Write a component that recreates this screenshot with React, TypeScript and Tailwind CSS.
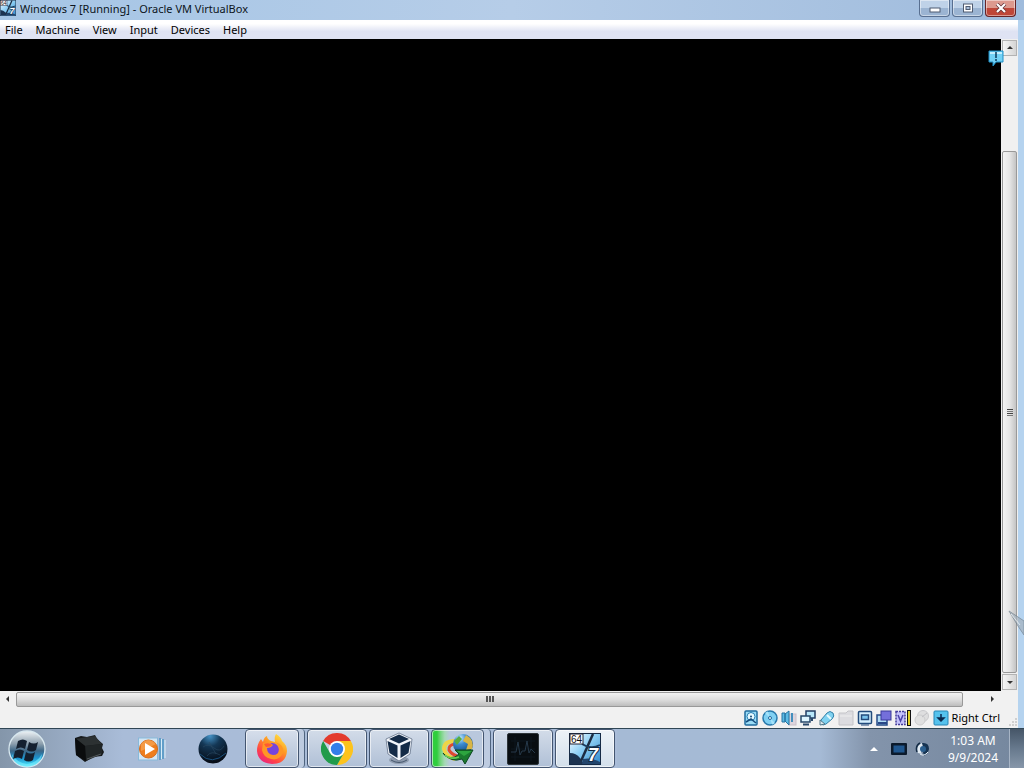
import React from "react";

const menus = ["File", "Machine", "View", "Input", "Devices", "Help"];

function VmIcon({ className }: { className: string }) {
  return (
    <svg viewBox="0 0 32 32" className={className} aria-hidden="true">
      <defs>
        <linearGradient id="vmg" x1="0" y1="0" x2="1" y2="1">
          <stop offset="0" stopColor="#ffffff" />
          <stop offset=".45" stopColor="#8fd0f5" />
          <stop offset="1" stopColor="#2f86c8" />
        </linearGradient>
      </defs>
      <rect x=".5" y=".5" width="31" height="31" fill="url(#vmg)" stroke="#152a45" />
      <path d="M1 20 Q7 20 11 25 L15 31 H1Z" fill="#1c3350" />
      <path d="M24 1 L12 28" stroke="#1c2c42" strokeWidth="2.500" />
      <path d="M13 11 Q22 17 31 12" stroke="#1c3c5e" strokeWidth="2" fill="none" />
      <path d="M14 26 Q22 24 31 29 V31 H13Z" fill="#22456d" />
      <rect x="1" y="1" width="13" height="10" fill="#fff" stroke="#223" />
      <text x="2" y="9.500" fontSize="10" fontFamily="Liberation Sans, sans-serif" fill="#111">64</text>
      <text x="19" y="28" fontSize="18" fontWeight="bold" fontStyle="italic" fontFamily="Liberation Sans, sans-serif" fill="#fff" stroke="#122a44" strokeWidth="2" paintOrder="stroke">7</text>
    </svg>
  );
}

function StartIcon() {
  return (
    <svg viewBox="0 0 38 38" className="size-[38px]" aria-hidden="true">
      <defs>
        <linearGradient id="orb" x1="0" y1="0" x2="0" y2="1">
          <stop offset="0" stopColor="#eef3f6" />
          <stop offset=".35" stopColor="#8ea0ae" />
          <stop offset=".55" stopColor="#3d6685" />
          <stop offset=".75" stopColor="#1c93cf" />
          <stop offset="1" stopColor="#55f0ff" />
        </linearGradient>
      </defs>
      <circle cx="19" cy="19" r="18" fill="url(#orb)" stroke="#d8e8ef" strokeWidth="1.3" />
      <path d="M4 24 Q9 33 19 34 Q29 33 34 24 Q33 36 19 37 Q5 36 4 24" fill="#7ceeff" opacity=".6" />
      <path d="M10 11 q5-3 9 0 l-2 8 q-4-3-9 0z M21 12 q5 3 9 0 l-2 8 q-4 3-9 0z M7 21 q5-3 9 0 l-2 8 q-4-3-9 0z M18 22 q5 3 9 0 l-2 8 q-4 3-9 0z" fill="#14202f" />
    </svg>
  );
}

function BoxIcon() {
  return (
    <svg viewBox="0 0 32 32" className="size-8" aria-hidden="true">
      <path d="M2 5 L8 3 L14 4 L22 2 L24 6 L30 11 L29 15 L31 19 L29 23 L20 24 L12 29 L3 22Z" fill="#171a1b" />
      <path d="M3 6 L14 4 L22 3 L29 11 L12 13Z" fill="#2c3132" />
      <path d="M12 13 L29 11 L29 21 L13 28Z" fill="#202526" />
      <path d="M2 5 L12 13 L13 28 L3 22Z" fill="#0a0c0d" />
      <path d="M14 26 L28 21" stroke="#53595b" />
    </svg>
  );
}

function PlayerIcon() {
  return (
    <svg viewBox="0 0 30 28" className="h-7 w-[30px]" aria-hidden="true">
      <path d="M24 3 V25 M27 4 V24" stroke="#3e8fc0" strokeWidth="1.3" />
      <path d="M25.5 4 V24 M29 5 V23" stroke="#d8edf8" />
      <rect x="2.5" y="3" width="19" height="22" fill="#d4e6f4" stroke="#88b9da" />
      <circle cx="12.500" cy="14" r="9" fill="#ee7d1d" stroke="#d46b1b" />
      <path d="M5 9 Q12 1 20 9 Q12 13 5 16Z" fill="#f9ad61" opacity=".6" />
      <path d="M9 8 L19 14 L9 20Z" fill="#fff" />
    </svg>
  );
}

function GlobeIcon() {
  return (
    <svg viewBox="0 0 32 32" className="size-8" aria-hidden="true">
      <defs>
        <radialGradient id="darkball" cx=".4" cy=".05" r=".9">
          <stop offset="0" stopColor="#4592c6" />
          <stop offset=".4" stopColor="#143755" />
          <stop offset="1" stopColor="#060d18" />
        </radialGradient>
      </defs>
      <circle cx="16" cy="16" r="14.500" fill="url(#darkball)" />
      <path d="M6 14 Q11 10 17 15 T27 13 M10 23 Q14 17 23 22 M12 9 L19 21" stroke="#2b4963" fill="none" opacity=".6" />
      <path d="M3 21 Q15 33 29 20" fill="none" stroke="#19507c" />
    </svg>
  );
}

function FirefoxIcon() {
  return (
    <svg viewBox="0 0 32 32" className="size-8" aria-hidden="true">
      <defs>
        <linearGradient id="ff" x1=".9" y1="0" x2=".2" y2="1">
          <stop offset="0" stopColor="#fff04a" />
          <stop offset=".4" stopColor="#ff9a24" />
          <stop offset=".75" stopColor="#ff4148" />
          <stop offset="1" stopColor="#e52388" />
        </linearGradient>
      </defs>
      <path d="M20 1 Q25 4 26 8 Q31 12 31 18 Q30 31 16 31 Q2 30 1 18 Q1 11 5 6 L7 9 Q8 4 11 3 Q11 6 15 8 L19 9 Q18 4 20 1Z" fill="url(#ff)" />
      <circle cx="16" cy="17" r="7" fill="#7644dc" />
      <path d="M7 10 Q13 8 17 12 Q15 15 11 15 Q11 21 17 22 Q23 22 23 16 Q23 12 19 9 Q29 12 27 20 Q23 28 15 26 Q7 24 6 17Z" fill="#ff9625" />
      <path d="M8 11 Q13 9 16 12 Q14 14 10 14" fill="#ff5b30" />
    </svg>
  );
}

function ChromeIcon() {
  return (
    <svg viewBox="0 0 32 32" className="size-8" aria-hidden="true">
      <path d="M16 16 L2.140 8 A16 16 0 0 1 29.860 8Z" fill="#e33b2e" />
      <path d="M16 8 H29.860 A16 16 0 0 1 16 32 L22.930 20Z" fill="#fcc31e" />
      <path d="M2.140 8 L9.070 20 L16 24 L22.930 20 L16 32 A16 16 0 0 1 2.140 8Z" fill="#219b4b" />
      <circle cx="16" cy="16" r="8" fill="#fff" />
      <circle cx="16" cy="16" r="6.200" fill="#337ee8" />
    </svg>
  );
}

function CubeIcon() {
  return (
    <svg viewBox="0 0 32 34" className="h-[34px] w-8" aria-hidden="true">
      <ellipse cx="16" cy="28" rx="10" ry="4" fill="#8f9caf" />
      <path d="M16 1 L29 7 L27 22 L16 29 L5 22 L3 7Z" fill="#f2f5fa" stroke="#53637b" strokeWidth=".7" />
      <path d="M16 2.500 L26 7 L16 11.500 L6 7Z M4.500 9 L14.500 13.500 V26 L6.500 21Z M27.500 9 L17.500 13.500 V26 L25.500 21Z" fill="#142b47" />
      <path d="M8 28 Q16 33 24 28" stroke="#45576e" fill="none" />
    </svg>
  );
}

function DownloaderIcon() {
  return (
    <svg viewBox="0 0 34 32" className="h-8 w-[34px]" aria-hidden="true">
      <defs>
        <radialGradient id="earth" cx=".35" cy=".2" r=".8">
          <stop offset="0" stopColor="#c7ebff" />
          <stop offset=".4" stopColor="#3c8bd1" />
          <stop offset="1" stopColor="#12477e" />
        </radialGradient>
      </defs>
      <path d="M14 8 Q3 8 3 16 Q5 24 14 26" fill="none" stroke="#eed447" strokeWidth="4" />
      <path d="M14 11 Q7 12 8 17 Q10 21 16 23" fill="none" stroke="#dd4930" strokeWidth="3" />
      <circle cx="22" cy="11" r="10" fill="url(#earth)" />
      <path d="M25 2 Q34 7 31 16 L25 17 L27 11 L22 8Z" fill="#d8b545" />
      <path d="M13 8 L18 3 L21 6 L16 12Z" fill="#58ad42" />
      <path d="M2 20 Q5 26 14 24 L18 21 L14 17 L32 17 L24 31 L21 26 Q10 30 2 20Z" fill="#1a7a2e" stroke="#0d4921" />
      <path d="M16 18 L31 18 L23 23Z" fill="#2da53f" />
      <path d="M4 22 Q9 27 18 24" stroke="#65ce54" strokeWidth="1.500" fill="none" />
    </svg>
  );
}

function MonitorIcon() {
  return (
    <svg viewBox="0 0 32 32" className="size-8" aria-hidden="true">
      <rect x=".5" y=".5" width="31" height="31" rx="1.500" fill="#080d11" stroke="#2d3438" />
      <path d="M4 8 H28 M4 16 H28 M4 24 H28 M8 4 V28 M24 4 V28" stroke="#0d171e" />
      <path d="M4 19 H9 L11 9 L13 22 L15 18 H18 L20 8 L22 20 L24 16 L28 20" stroke="#26394a" fill="none" />
    </svg>
  );
}

const pinned = [
  { name: "Storage", icon: <BoxIcon /> },
  { name: "Media player", icon: <PlayerIcon /> },
  { name: "Globe", icon: <GlobeIcon /> },
];

const tasks = [
  { name: "Firefox", icon: <FirefoxIcon />, look: "stack" },
  { name: "Chrome", icon: <ChromeIcon />, look: "plain" },
  { name: "VirtualBox", icon: <CubeIcon />, look: "plain" },
  { name: "Download manager", icon: <DownloaderIcon />, look: "progress" },
  { name: "Monitor", icon: <MonitorIcon />, look: "plain" },
  { name: "Windows 7 machine", icon: <VmIcon className="size-8" />, look: "active" },
];

const face: Record<string, string> = {
  stack: "mr-[5px] bg-linear-to-b from-[#d6deeb] to-[#b0c0d6]",
  plain: "bg-linear-to-b from-[#d3dce9] to-[#b0c0d6]",
  progress: "mr-[6px] bg-linear-to-r from-[#2fce3e] from-10% via-[#a5d9b5] via-25% to-[#b9c8dd] to-35%",
  active: "bg-linear-to-b from-[#eef3f8] to-[#d3dfeb]",
};

const statusIcons: { name: string; art: React.ReactNode }[] = [
  {
    name: "Hard disks",
    art: (
      <>
        <rect x="2" y="1" width="12" height="14" rx="1" fill="#9bdcf6" stroke="#216b9d" strokeWidth="1.500" />
        <circle cx="8" cy="6.500" r="4" fill="#e7faff" stroke="#267cb1" />
        <circle cx="8" cy="6.500" r="1" fill="#174976" />
        <path d="M3 12 L8 9 L13 13" stroke="#174e7e" strokeWidth="1.500" fill="none" />
      </>
    ),
  },
  {
    name: "Optical drives",
    art: (
      <>
        <circle cx="8" cy="8" r="7" fill="#7fd0f3" stroke="#2879ac" strokeWidth="1.500" />
        <path d="M8 8 L3 3 A7 7 0 0 1 6 1.500Z M8 8 L13 13 A7 7 0 0 1 10 14.500Z" fill="#a5e2fa" />
        <circle cx="8" cy="8" r="1.500" fill="#edfaff" stroke="#226b9e" />
      </>
    ),
  },
  {
    name: "Audio",
    art: (
      <>
        <rect x="8" y="4" width="7" height="11" fill="#dcd4dc" stroke="#c9bfc9" />
        <path d="M1 3 H4 V12 H1Z M4 4 L8 1 V15 L4 11Z" fill="#5dbbe4" stroke="#2773a1" />
        <path d="M11 3 V12" stroke="#438fbd" strokeWidth="2" />
      </>
    ),
  },
  {
    name: "Network",
    art: (
      <>
        <path d="M6 1 H15 V8 H6Z" fill="#b9e7fa" stroke="#233d63" strokeWidth="1.500" />
        <path d="M1 6 H10 V12 H1Z" fill="#dff5ff" stroke="#28486b" strokeWidth="1.500" />
        <path d="M3 14.500 H9 M12 8 V11" stroke="#28486b" strokeWidth="2" />
      </>
    ),
  },
  {
    name: "USB",
    art: (
      <>
        <path d="M2 10 L8 3 Q11 0 14 3 Q16 6 13 9 L7 14 Q1 17 2 10Z" fill="#80d2f1" stroke="#3381a8" />
        <path d="M1 10 L6 14 L1 15Z" fill="#dbe8ee" stroke="#53788b" />
        <path d="M8 5 L12 9" stroke="#e6fbff" strokeWidth="2" />
      </>
    ),
  },
  {
    name: "Shared folders",
    art: (
      <>
        <path d="M1 3 H8 L10 1 H15 V15 H1Z" fill="#dcdce0" stroke="#c4c4c8" />
        <path d="M2 6 H14" stroke="#eee" />
      </>
    ),
  },
  {
    name: "Display",
    art: (
      <>
        <rect x="1.500" y="1.500" width="13" height="12" rx="1" fill="#d6f0ff" stroke="#224b7c" strokeWidth="1.500" />
        <rect x="4.500" y="5" width="7" height="4.500" fill="#7ac4ed" stroke="#224b7c" strokeWidth="1.500" />
        <path d="M4 15 H12" stroke="#224b7c" />
      </>
    ),
  },
  {
    name: "Recording",
    art: (
      <>
        <rect x="1" y="5" width="10" height="10" fill="#b0dcf4" stroke="#264b87" strokeWidth="1.500" />
        <rect x="5" y="1" width="10" height="9" fill="#746fdb" stroke="#3b3a99" />
        <path d="M2 13 H11" stroke="#294887" strokeWidth="2" />
      </>
    ),
  },
  {
    name: "Processor",
    art: (
      <>
        <rect x="1" y="1.500" width="9" height="13" fill="#c4c2fa" stroke="#443d9b" strokeWidth="1.500" strokeDasharray="2 1" />
        <path d="M3 5 L5.500 11 L8 5" stroke="#4b43a8" strokeWidth="1.500" fill="none" />
        <rect x="12" y="0" width="4" height="16" fill="#111" />
        <rect x="13" y="1" width="2" height="14" fill="#dfcf26" />
      </>
    ),
  },
  {
    name: "Mouse",
    art: (
      <>
        <circle cx="9" cy="6" r="5.500" fill="#dededf" stroke="#c9c9cc" />
        <circle cx="6" cy="10" r="5" fill="#e0e0e0" stroke="#cdcdce" />
        <path d="M8 7 L13 3" stroke="#c0c0c4" />
      </>
    ),
  },
  {
    name: "Keyboard",
    art: (
      <>
        <rect x="1" y="1" width="14" height="14" rx="1" fill="#55c2ed" stroke="#2785b6" />
        <path d="M8 4 V9 M5 8 L8 11 L11 8Z" stroke="#0b294d" strokeWidth="1.500" fill="#0b294d" />
      </>
    ),
  },
];

const arrowPaths = {
  up: "M1 5 L4 2 L7 5Z",
  down: "M1 3 L4 6 L7 3Z",
  left: "M5 1 L2 4 L5 7Z",
  right: "M3 1 L6 4 L3 7Z",
};

function ScrollArrow({ dir, framed }: { dir: keyof typeof arrowPaths; framed?: boolean }) {
  return (
    <button
      aria-label={"Scroll " + dir}
      className={
        framed
          ? "flex h-4 w-[15px] shrink-0 items-center justify-center border border-[#b3b3b3] bg-linear-to-r from-[#f5f5f5] to-[#d5d5d5]"
          : "flex size-4 shrink-0 items-center justify-center"
      }
    >
      <svg viewBox="0 0 8 8" className="size-2">
        <path d={arrowPaths[dir]} fill="#333" />
      </svg>
    </button>
  );
}

const windowButton = "flex h-[17px] items-center justify-center rounded-b-sm border border-t-0 shadow-[inset_0_0_0_1px_rgba(255,255,255,0.45)]";

export default function App() {
  return (
    <div className="relative flex h-screen flex-col overflow-hidden bg-[#b5d3ef] font-['Noto_Sans','Open_Sans',sans-serif] text-[11px] text-black select-none">
      <header className="flex h-5 shrink-0 items-start bg-linear-to-r from-[#a5c5e5] via-[#b6cde8] to-[#9fbbdc] pr-2">
        <VmIcon className="size-4" />
        <h1 className="ml-1 flex-1 truncate text-[11px] leading-[18px] text-[#0c1420]">Windows 7 [Running] - Oracle VM VirtualBox</h1>
        <div className="flex gap-[2px]">
          <button aria-label="Minimize" className={windowButton + " w-[31px] border-[#586f90] bg-linear-to-b from-[#bfd2e8] from-50% to-[#9bb4d2] to-50%"}>
            <svg viewBox="0 0 14 10" className="h-[10px] w-[14px]">
              <rect x="2" y="5" width="10" height="4" fill="#fff" stroke="#4f5b70" />
            </svg>
          </button>
          <button aria-label="Restore" className={windowButton + " w-[31px] border-[#586f90] bg-linear-to-b from-[#bfd2e8] from-50% to-[#9bb4d2] to-50%"}>
            <svg viewBox="0 0 12 10" className="h-[10px] w-3">
              <rect x="1.500" y="1" width="9" height="8" fill="#fff" stroke="#4f5b70" />
              <rect x="4" y="3.500" width="4" height="3" fill="#a9bfda" stroke="#4f5b70" />
            </svg>
          </button>
          <button aria-label="Close" className={windowButton + " w-[31px] border-[#672326] bg-linear-to-b from-[#dc998e] from-50% to-[#be4638] to-50%"}>
            <svg viewBox="0 0 12 10" className="h-[10px] w-3">
              <path d="M2 1 L10 9 M10 1 L2 9" stroke="#603035" strokeWidth="3.600" />
              <path d="M2 1 L10 9 M10 1 L2 9" stroke="#fff" strokeWidth="2.200" />
            </svg>
          </button>
        </div>
      </header>

      <div className="mr-[6px] flex min-h-0 flex-1 flex-col bg-[#f1f1f1]">
        <nav className="flex h-[19px] shrink-0 items-center gap-[13px] bg-linear-to-b from-white from-20% to-[#dfe3f3] to-60% pl-[5px]">
          {menus.map((m) => (
            <button key={m} className="text-[11px] leading-[18px]">
              {m}
            </button>
          ))}
        </nav>

        <div className="flex min-h-0 flex-1">
          <main aria-label="Guest screen" className="relative mr-px flex-1 bg-black">
            <svg viewBox="0 0 16 18" className="absolute top-[11px] -right-[3px] h-[18px] w-4" aria-hidden="true">
              <path d="M1 1 H15 V12 H8 L5 16 V12 H1Z" fill="#72d2f6" stroke="#208fc5" />
              <path d="M2 3 H14" stroke="#c3efff" strokeWidth="2" />
              <path d="M8 2 V8 M8 9 V11" stroke="#093a5e" strokeWidth="1.500" />
            </svg>
          </main>
          <div className="flex w-4 flex-col items-start bg-[#f0f0f0] py-px">
            <ScrollArrow dir="up" framed />
            <div className="h-[95px] shrink-0" />
            <div className="mb-px flex w-[15px] flex-1 flex-col items-center justify-center gap-px rounded-xs border border-[#999] bg-linear-to-r from-[#f4f4f4] via-[#e6e6e6] to-[#c4c4c4]">
              <span className="h-px w-1.5 bg-[#444]" />
              <span className="h-px w-1.5 bg-[#777]" />
              <span className="h-px w-1.5 bg-[#444]" />
              <span className="h-px w-1.5 bg-[#777]" />
            </div>
            <ScrollArrow dir="down" framed />
          </div>
        </div>

        <div className="mr-[18px] flex h-4 shrink-0 items-center">
          <ScrollArrow dir="left" />
          <div className="flex h-[15px] flex-1 items-center justify-center gap-px rounded-xs border border-[#999] bg-linear-to-b from-[#f2f2f2] via-[#dedede] to-[#bdbdbd]">
            <span className="h-1.5 w-[2px] bg-[#555]" />
            <span className="h-1.5 w-[2px] bg-[#555]" />
            <span className="h-1.5 w-[2px] bg-[#555]" />
          </div>
          <div className="w-[21px]" />
          <ScrollArrow dir="right" />
        </div>

        <div className="flex h-[21px] shrink-0 items-center justify-end gap-[3px]">
          {statusIcons.map((s) => (
            <button key={s.name} aria-label={s.name} className="size-4">
              <svg viewBox="0 0 16 16" className="size-4">
                {s.art}
              </svg>
            </button>
          ))}
          <span className="text-[11px] leading-4">Right Ctrl</span>
          <svg viewBox="0 0 12 12" className="ml-[3px] size-3 self-end" aria-hidden="true">
            <path d="M9 2h2v2h-2z M6 5h2v2h-2z M9 5h2v2h-2z M3 8h2v2h-2z M6 8h2v2h-2z M9 8h2v2h-2z" fill="#d0d0d0" />
          </svg>
        </div>
      </div>

      <footer className="flex h-10 shrink-0 items-stretch gap-[2px] border-t border-[#304655] bg-linear-to-r from-[#8496aa] to-[#a9bcd8] to-12%">
        <button aria-label="Start" className="flex w-[57px] items-center pl-2">
          <StartIcon />
        </button>
        {pinned.map((p) => (
          <button key={p.name} aria-label={p.name} className="flex w-[60px] items-center justify-center">
            {p.icon}
          </button>
        ))}
        {tasks.map((t) => (
          <div key={t.name} className={t.look === "stack" || t.look === "progress" ? "flex w-[60px] rounded-sm border-r border-[#4f647f] bg-[#bdcbe0]" : "flex w-[60px]"}>
            <button
              aria-label={t.name}
              className={"flex flex-1 items-center justify-center rounded-sm border border-[#435570] shadow-[inset_0_0_0_1px_rgba(255,255,255,0.6)] " + face[t.look]}
            >
              {t.icon}
            </button>
          </div>
        ))}
        <div className="flex flex-1 items-center justify-end bg-linear-to-r from-[#a5bad5] from-50% via-[#8394ab] via-62% to-[#75879e]">
          <button aria-label="Show hidden icons" className="flex w-5 justify-center">
            <svg viewBox="0 0 8 6" className="h-1.5 w-2">
              <path d="M0 5 L4 1 L8 5Z" fill="#fff" />
            </svg>
          </button>
          <svg viewBox="0 0 18 14" className="ml-1.5 h-[14px] w-[18px]" aria-hidden="true">
            <rect x="1" y="1" width="16" height="12" rx="1" fill="#0b1a2c" />
            <rect x="3.500" y="3.500" width="11" height="7" fill="#20578f" />
          </svg>
          <svg viewBox="0 0 16 16" className="ml-[7px] size-4" aria-hidden="true">
            <path d="M3 12 Q0 5 7 2 L9 5 Q4 8 7 13Z" fill="#dfe9f1" />
            <path d="M7 2 Q14 1 14 8 Q13 13 9 15 L8 11 Q11 8 8 6Z" fill="#173452" />
            <circle cx="8" cy="8" r="3" fill="#2c5f8e" />
            <path d="M2 11 Q0 5 5 2" stroke="#132b45" strokeWidth="1.500" fill="none" />
            <path d="M5 13 Q9 16 13 11" stroke="#e5eef5" fill="none" />
          </svg>
          <div className="mr-[7px] ml-[13px] w-[58px] text-center text-xs leading-[17px] text-white">
            <div>1:03 AM</div>
            <div>9/9/2024</div>
          </div>
          <button aria-label="Show desktop" className="w-[15px] self-stretch border-l border-[#a7b4c5] bg-linear-to-b from-[#465668] via-[#67798d] to-[#8797aa]" />
        </div>
      </footer>

      <svg viewBox="0 0 16 26" className="absolute top-[610px] right-0 h-[26px] w-4 opacity-70" aria-hidden="true">
        <path d="M1 1 L16 11 V25 L10 16Z" fill="#a5b2be" stroke="#71808d" />
        <path d="M3 4 L12 15" stroke="#eaf1f5" />
      </svg>
    </div>
  );
}
